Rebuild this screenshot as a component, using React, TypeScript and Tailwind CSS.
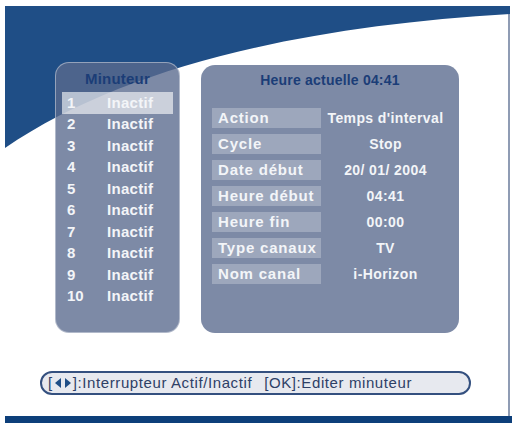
const timers = ["1", "2", "3", "4", "5", "6", "7", "8", "9", "10"];

const details = [
  { label: "Action", value: "Temps d'interval" },
  { label: "Cycle", value: "Stop" },
  { label: "Date début", value: "20/ 01/ 2004" },
  { label: "Heure début", value: "04:41" },
  { label: "Heure fin", value: "00:00" },
  { label: "Type canaux", value: "TV" },
  { label: "Nom canal", value: "i-Horizon" },
];

const font = { fontFamily: '"Liberation Sans", Arial, sans-serif' };

export default function App() {
  return (
    <div className="w-[512px] h-[423px] bg-white overflow-hidden" style={font}>
      <div className="pt-[6px] pl-[5px]">
        <div className="relative w-[505px] h-[417px] border-r-2 border-[#8f9cb4] flex flex-col">
          {/* blue wave behind the panels */}
          <svg className="absolute left-0 top-0" width="505" height="160" viewBox="0 0 505 160">
            <path d="M0 0 H505 V8 C300 20 120 60 0 142 Z" fill="#1f4e86" />
          </svg>

          <div className="relative flex items-end gap-[21px] pl-[50px] mt-[56px]">
            {/* timers list */}
            <div className="w-[125px] h-[271px] rounded-[14px] border-[1.5px] border-white/40 bg-[rgba(90,107,142,0.79)] px-[6px]">
              <div className="h-[29px] pt-[5px] text-center text-[15px] font-bold text-[#1b3d77] tracking-[0.2px]">
                Minuteur
              </div>
              {timers.map((n, i) => (
                <div
                  key={n}
                  className={`flex items-center h-[21.5px] text-[15px] font-bold text-[#f3f5f8] ${
                    i === 0 ? "bg-white/60" : ""
                  }`}
                >
                  <span className="w-[45px] pl-[5px]">{n}</span>
                  <span className="tracking-[0.3px]">Inactif</span>
                </div>
              ))}
            </div>

            {/* timer details */}
            <div className="w-[258px] h-[268px] rounded-[14px] bg-[rgba(90,107,142,0.79)] px-[11px]">
              <div className="h-[43px] pt-[5px] text-center text-[14px] font-bold text-[#1b3d77] tracking-[0.2px]">
                Heure actuelle 04:41
              </div>
              <div className="flex flex-col gap-[6px]">
                {details.map((d) => (
                  <div key={d.label} className="flex items-center h-[20px]">
                    <div className="w-[109px] h-full bg-white/25 pl-[6px] text-[15px] font-bold text-[#f3f5f8] tracking-[0.8px] leading-[20px]">
                      {d.label}
                    </div>
                    <div className="flex-1 text-center text-[14px] font-bold text-[#f3f5f8] tracking-[0.4px] pl-[2px]">
                      {d.value}
                    </div>
                  </div>
                ))}
              </div>
            </div>
          </div>

          {/* help bar */}
          <div className="relative mt-[38px] ml-[35px] w-[431px] h-[24px] rounded-full border-2 border-[#34507f] bg-[#e7e9ef] flex items-center pl-[6px] text-[15px] text-[#2e4066] tracking-[0.6px]">
            <span>[</span>
            <svg width="18" height="12" viewBox="0 0 18 12" className="mx-[1px]">
              <path d="M7 1 L1 6 L7 11 Z" fill="#1f4e86" />
              <path d="M11 1 L17 6 L11 11 Z" fill="#1f4e86" />
            </svg>
            <span>]:Interrupteur Actif/Inactif</span>
            <span className="ml-[12px]">[OK]:Editer minuteur</span>
          </div>

          <div className="mt-auto h-[7px] bg-[#0d3f7a] -mr-[10px]" />
        </div>
      </div>
    </div>
  );
}
